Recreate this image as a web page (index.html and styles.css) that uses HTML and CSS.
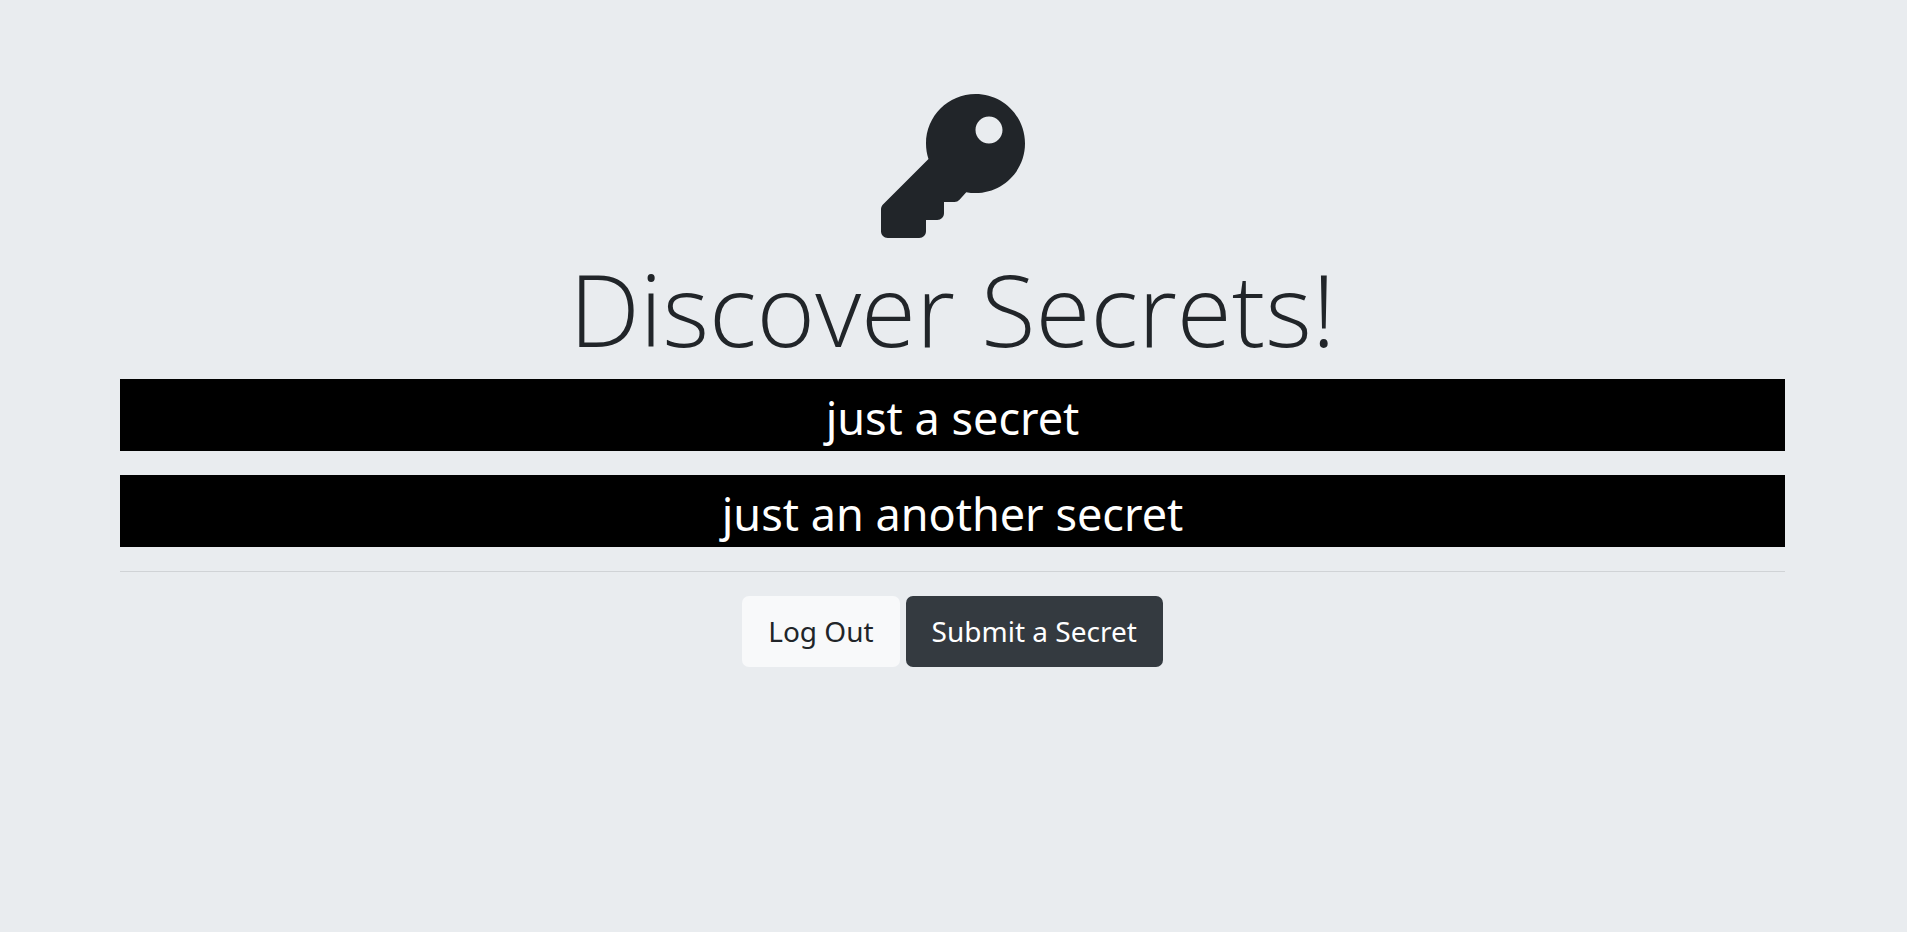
FILE: index.html
```html
<!DOCTYPE html>
<html lang="en">
<head>
<meta charset="utf-8">
<meta name="viewport" content="width=device-width, initial-scale=1">
<title>Secrets</title>
<link rel="stylesheet" href="styles.css">
</head>
<body>
<main class="jumbotron">
  <svg class="key" viewBox="0 0 512 512" aria-hidden="true"><path fill="currentColor" d="M512 176.001C512 273.203 433.202 352 336 352c-11.22 0-22.19-1.062-32.827-3.069l-24.012 27.014A23.999 23.999 0 0 1 261.223 384H224v40c0 13.255-10.745 24-24 24h-40v40c0 13.255-10.745 24-24 24H24c-13.255 0-24-10.745-24-24v-78.059c0-6.365 2.529-12.47 7.029-16.971l161.802-161.802C163.108 213.814 160 195.271 160 176 160 78.798 238.797.001 335.999 0 433.488-.001 512 78.511 512 176.001zM336 128c0 26.51 21.49 48 48 48s48-21.49 48-48-21.49-48-48-48-48 21.49-48 48z"/></svg>
  <h1 class="title">Discover Secrets!</h1>
  <p class="secret">just a secret</p>
  <p class="secret">just an another secret</p>
  <hr class="divider">
  <div class="actions">
    <a class="btn btn-light" href="#logout">Log Out</a>
    <a class="btn btn-dark" href="#submit">Submit a Secret</a>
  </div>
</main>
</body>
</html>
```
FILE: styles.css
```css
* { box-sizing: border-box; }
body {
  margin: 0;
  min-height: 100vh;
  background: #e9ecef;
  color: #212529;
  font-family: "Noto Sans", "Open Sans", sans-serif;
  line-height: 1.5;
}
.jumbotron {
  padding: 94px 122px 64px 120px;
  text-align: center;
}
.key { display: block; width: 144px; height: 144px; margin: 0 auto 12px; }
.title {
  margin: 0 0 13px;
  font-family: "Open Sans", "Noto Sans", sans-serif;
  font-size: 100px;
  font-weight: 300;
  line-height: 116px;
}
.secret {
  margin: 0 0 24px;
  padding-top: 6px;
  background: #000;
  color: #fff;
  font-size: 45px;
  line-height: 66px;
}
.divider { margin: 0 0 24px; border: 0; border-top: 1px solid #d0d3d6; }
.actions { display: flex; justify-content: center; gap: 6px; }
.btn {
  padding: 12px 26px;
  border-radius: 7px;
  font-size: 28px;
  line-height: 47px;
  text-decoration: none;
}
.btn-light { background: #f8f9fa; color: #212529; }
.btn-dark { background: #343a40; color: #fff; }
```
